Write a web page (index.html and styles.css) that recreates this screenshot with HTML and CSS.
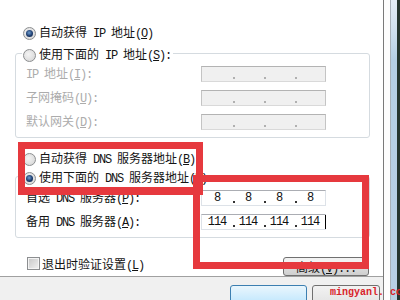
FILE: index.html
```html
<!DOCTYPE html>
<html lang="zh-CN">
<head>
<meta charset="utf-8">
<title>DNS</title>
<link rel="stylesheet" href="styles.css">
</head>
<body>
<div class="screen">
  <div class="dialog">
    <div class="content">
      <div class="opt"><span class="radio on"></span><span>自动获得<span class="a"> IP </span>地址<span class="a">(<u>O</u>)</span></span></div>
      <div class="group g1">
        <div class="opt legend"><span class="radio"></span><span>使用下面的<span class="a"> IP </span>地址<span class="a">(<u>S</u>):</span></span></div>
        <div class="row first dis"><span class="lbl"><span class="a">IP </span>地址<span class="a">(<u>I</u>):</span></span>
          <div class="ip off"><span class="n"></span><i></i><span class="n"></span><i></i><span class="n"></span><i></i><span class="n"></span></div></div>
        <div class="row dis"><span class="lbl">子网掩码<span class="a">(<u>U</u>):</span></span>
          <div class="ip off"><span class="n"></span><i></i><span class="n"></span><i></i><span class="n"></span><i></i><span class="n"></span></div></div>
        <div class="row dis"><span class="lbl">默认网关<span class="a">(<u>D</u>):</span></span>
          <div class="ip off"><span class="n"></span><i></i><span class="n"></span><i></i><span class="n"></span><i></i><span class="n"></span></div></div>
      </div>
      <div class="opt dns1"><span class="radio"></span><span>自动获得<span class="a"> DNS </span>服务器地址<span class="a">(<u>B</u>)</span></span></div>
      <div class="group g2">
        <div class="opt legend"><span class="radio on"></span><span>使用下面的<span class="a"> DNS </span>服务器地址<span class="a">(<u>E</u>):</span></span></div>
        <div class="row first2"><span class="lbl">首选<span class="a"> DNS </span>服务器<span class="a">(<u>P</u>):</span></span>
          <div class="ip"><span class="n">8</span><i></i><span class="n">8</span><i></i><span class="n">8</span><i></i><span class="n">8</span></div></div>
        <div class="row"><span class="lbl">备用<span class="a"> DNS </span>服务器<span class="a">(<u>A</u>):</span></span>
          <div class="ip"><span class="n">114</span><i></i><span class="n">114</span><i></i><span class="n">114</span><i></i><span class="n">114<b class="caret"></b></span></div></div>
      </div>
      <div class="bottom">
        <span class="check"></span><span class="chk-label">退出时验证设置<span class="a">(<u>L</u>)</span></span>
        <span class="btn adv">高级<span class="a">(<u>V</u>)...</span></span>
      </div>
    </div>
    <div class="footer">
      <span class="fbtn ok"></span><span class="fbtn cancel"></span>
    </div>
  </div>
  <div class="frame"></div>
  <div class="mark mark1"></div>
  <div class="mark mark2"></div>
  <div class="wm">mingyanl. com</div>
</div>
</body>
</html>
```

FILE: styles.css
```css
html, body {
  margin: 0;
  padding: 0;
  background: #fff;
}
body {
  font-family: "Noto Sans CJK SC", "Liberation Mono", sans-serif;
  font-size: 12px;
  line-height: 16px;
  color: #141414;
}
.a {
  font-family: "Liberation Mono", monospace;
  letter-spacing: -1.2px;
}
u { text-decoration: underline; text-underline-offset: 1px; }
.screen {
  width: 400px;
  height: 300px;
  display: flex;
  position: relative;
  overflow: hidden;
  background: #fff;
}
.dialog {
  width: 383px;
  border-right: 1px solid #7a7a7a;
  display: flex;
  flex-direction: column;
  flex: none;
}
.frame {
  flex: 1;
  background:
    linear-gradient(to right, #fdfdfd 0 6px, #a9b1b8 6px 7px, transparent 7px 13px, #25352e 13px),
    linear-gradient(to bottom, #e3edf5 0, #cfe0ee 30px, #b5cfe4 60px, #b8d0e4 300px);
}
.content {
  height: 289px;
  box-sizing: border-box;
  padding: 24px 13px 0 15px;
  display: flex;
  flex-direction: column;
}
.opt {
  display: flex;
  align-items: center;
  height: 18px;
  gap: 3px;
  padding-left: 8px;
  white-space: pre;
}
.radio {
  flex: none;
  width: 13px;
  height: 13px;
  box-sizing: border-box;
  border: 1px solid #8c8e90;
  border-radius: 50%;
  background: radial-gradient(circle at 40% 40%, #f4f4f4, #d2d2d2);
  position: relative;
}
.radio.on::after {
  content: '';
  position: absolute;
  left: 2px;
  top: 2px;
  width: 7px;
  height: 7px;
  border-radius: 50%;
  background: radial-gradient(circle at 45% 40%, #6f9ed0 0, #1d3c6e 55%, #0d1f3d 100%);
}
.group {
  border: 1px solid #d5dbe0;
  border-radius: 3px;
  padding: 0 0 7px 10px;
  display: flex;
  flex-direction: column;
}
.g1 { margin-top: 11px; }
.g2 { margin-top: 8px; }
.dns1 { margin-top: 12px; }
.legend {
  align-self: flex-start;
  margin: -8px 0 0 -4px;
  padding: 0 2px 0 1px;
  background: #fff;
}
.row {
  display: flex;
  align-items: center;
  height: 16px;
  margin-top: 8px;
  white-space: pre;
}
.row.first { margin-top: 2px; }
.row.first2 { margin-top: 3px; }
.row.dis .lbl { color: #acacac; }
.lbl { width: 175px; flex: none; }
.ip {
  width: 125px;
  height: 16px;
  box-sizing: border-box;
  border: 1px solid #dde2e8;
  border-top-color: #abadb3;
  background: #fff;
  display: flex;
  align-items: center;
  padding-left: 2px;
}
.ip.off {
  background: #f0f0f0;
  border-color: #d9d9d9;
  border-top-color: #b3b3b3;
  border-left-color: #c4c4c4;
  border-right-color: #c4c4c4;
}
.ip .n {
  width: 26px;
  flex: none;
  text-align: center;
  letter-spacing: -1px;
  font-family: "Liberation Mono", monospace;
  font-size: 12px;
  line-height: 14px;
  color: #111;
  position: relative;
}
.ip i {
  flex: none;
  width: 2px;
  height: 2px;
  margin: 8px 0 0 3px;
  background: #333;
}
.ip.off i { background: #b0b0b0; }
.caret {
  position: absolute;
  right: -3px;
  top: 0;
  width: 1px;
  height: 14px;
  background: #000;
}
.bottom {
  margin-top: 19px;
  display: flex;
  align-items: flex-start;
  height: 19px;
  padding-left: 12px;
  white-space: pre;
}
.check {
  flex: none;
  width: 13px;
  height: 13px;
  box-sizing: border-box;
  border: 1px solid #8c8e90;
  background: linear-gradient(135deg, #c6c6c6, #f2f2f2);
  box-shadow: inset 0 0 0 1px #f4f4f4;
}
.chk-label {
  margin-left: 2px;
  line-height: 13px;
}
.btn {
  margin-left: auto;
  margin-right: 1px;
  width: 86px;
  height: 19px;
  box-sizing: border-box;
  border: 1px solid #707070;
  border-radius: 3px;
  background: linear-gradient(to bottom, #f2f2f2 0 45%, #dddddd 50%, #cfcfcf 100%);
  text-align: center;
  line-height: 17px;
}
.footer {
  flex: 1;
  border-top: 1px solid #a0a0a0;
  background: #f0f0f0;
  display: flex;
  align-items: flex-start;
  padding-top: 8px;
  padding-left: 230px;
  gap: 5px;
}
.fbtn {
  height: 20px;
  box-sizing: border-box;
  border-radius: 3px;
  flex: none;
}
.fbtn.ok {
  width: 77px;
  border: 1px solid #3c7fb1;
  background: linear-gradient(#eaf6fd, #bee6fd);
}
.fbtn.cancel {
  width: 68px;
  border: 1px solid #707070;
  background: linear-gradient(#f2f2f2, #e3e3e3);
}
.mark {
  position: absolute;
  box-sizing: border-box;
  border: 7px solid #e6393e;
}
.mark1 {
  left: 18px;
  top: 142px;
  width: 185px;
  height: 53px;
  border-bottom-width: 8px;
}
.mark2 {
  left: 193px;
  top: 175px;
  width: 176px;
  height: 94px;
}
.wm {
  position: absolute;
  left: 330px;
  top: 286px;
  font-family: "Liberation Mono", monospace;
  font-weight: bold;
  font-size: 10px;
  line-height: 14px;
  color: #d8232a;
  white-space: pre;
}
```
